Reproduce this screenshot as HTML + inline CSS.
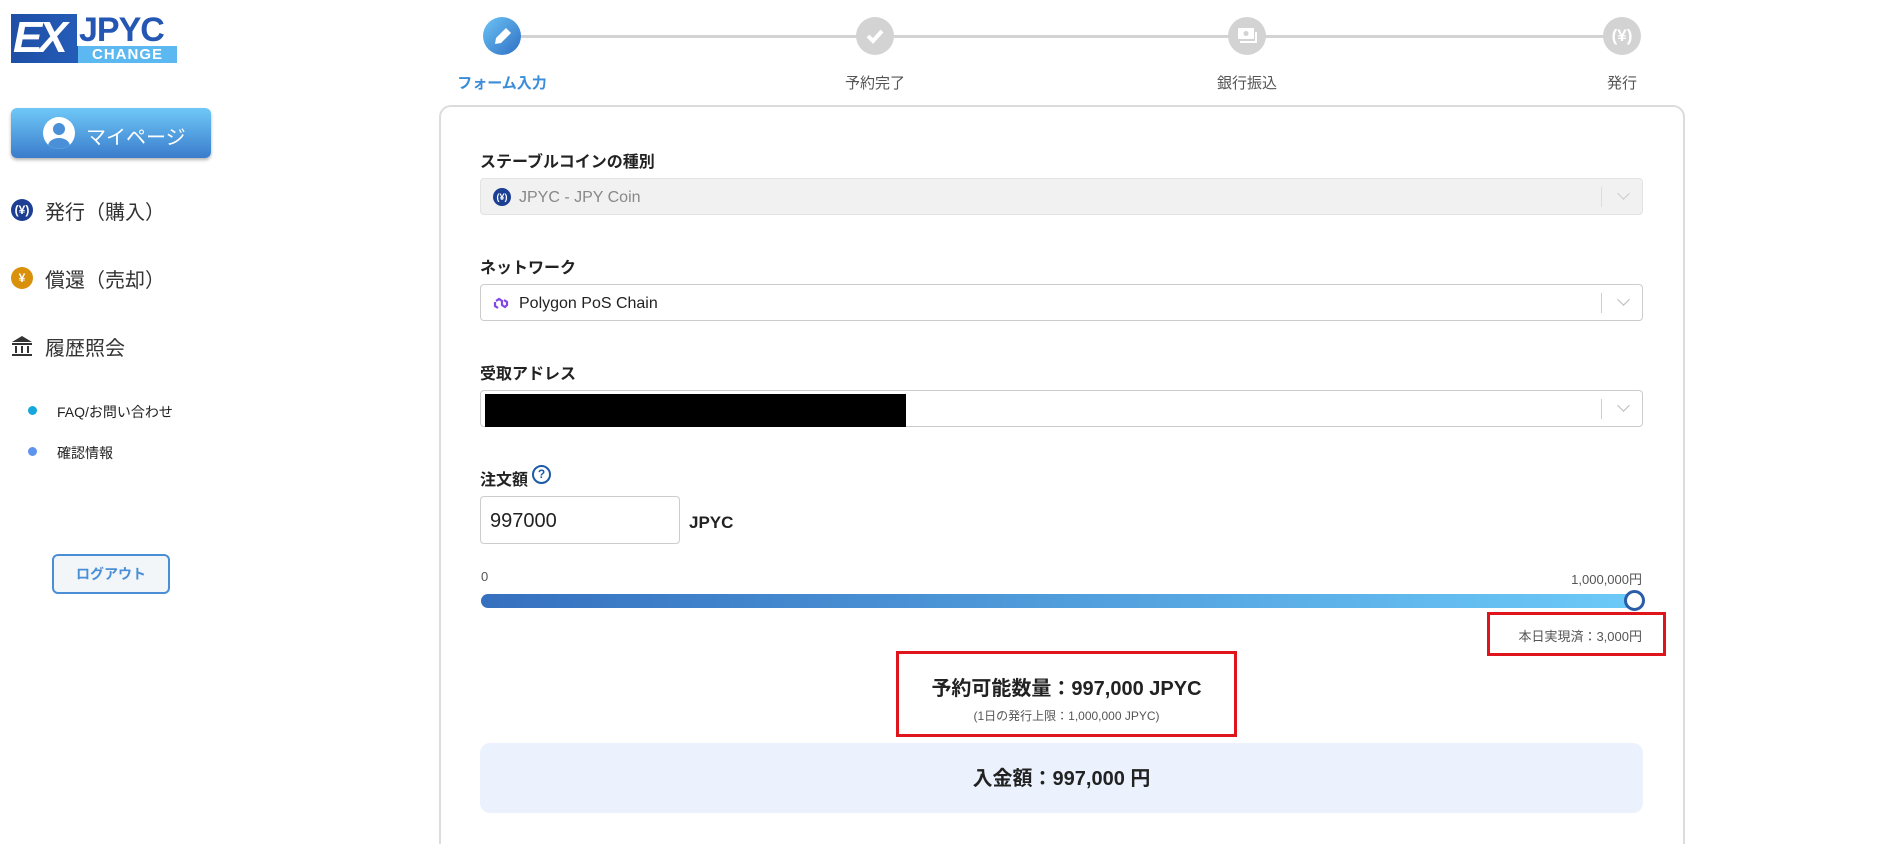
<!DOCTYPE html>
<html style="height:844px;overflow:hidden"><head><meta charset="utf-8">
<style>
*{box-sizing:border-box;margin:0;padding:0}
body{width:1886px;height:844px;overflow:hidden;background:#fff;font-family:"Liberation Sans","Noto Sans CJK JP",sans-serif;color:#222;position:relative}
.a{position:absolute}
.lbl{position:absolute;left:480px;font-size:16px;font-weight:bold;color:#222}
.sel{position:absolute;left:480px;width:1163px;height:37px;border:1px solid #ccc;border-radius:4px;background:#fff}
.sel .sep{position:absolute;right:40px;top:8px;width:1px;height:20px;background:#ccc}
.sel .chev{position:absolute;right:14px;top:10px;width:9px;height:9px;border-right:1.5px solid #bbb;border-bottom:1.5px solid #bbb;transform:rotate(45deg)}
.step{position:absolute;width:38px;height:38px;border-radius:50%;background:#d3d3d3;top:17px}
.stl{position:absolute;top:72px;font-size:15px;color:#555;width:140px;text-align:center}
.nav{position:absolute;left:45px;font-size:20px;color:#333}
</style></head><body>
<!-- logo -->
<div class="a" style="left:11px;top:14px;width:166px;height:49px;background:linear-gradient(90deg,#1f4fa6,#2a6fd0)"></div>
<div class="a" style="left:13px;top:12px;font:bold italic 44px 'Liberation Sans',sans-serif;color:#fff;letter-spacing:-4px;line-height:52px">EX</div>
<div class="a" style="left:77px;top:12px;width:100px;height:34px;font:bold 34px 'Liberation Sans',sans-serif;letter-spacing:-1px;line-height:36px;background:#fff;color:#2456b3;padding-left:2px">JPYC</div>
<div class="a" style="left:78px;top:46px;width:99px;height:17px;background:#5cb8f0;font:bold 15px 'Liberation Sans',sans-serif;color:#fff;text-align:center;line-height:17px;letter-spacing:1px">CHANGE</div>
<!-- mypage -->
<div class="a" style="left:11px;top:108px;width:200px;height:50px;border-radius:6px;background:linear-gradient(#6fc8f7,#3a7ccc);box-shadow:0 2px 3px rgba(0,0,0,.3)"></div>
<div class="a" style="left:43px;top:117px;width:32px;height:32px;border-radius:50%;background:#fff;overflow:hidden"><div class="a" style="left:10px;top:6px;width:12px;height:12px;border-radius:50%;background:#4a90d9"></div><div class="a" style="left:5px;top:21px;width:22px;height:16px;border-radius:50%;background:#4a90d9"></div></div>
<div class="a" style="left:86px;top:121px;font-size:20px;color:#fff">マイページ</div>
<!-- nav -->
<div class="a" style="left:11px;top:199px;width:22px;height:22px;border-radius:50%;background:#1c3f94;color:#fff;font-size:12px;text-align:center;line-height:22px;font-weight:bold">(¥)</div>
<div class="nav" style="top:196px">発行（購入）</div>
<div class="a" style="left:11px;top:267px;width:22px;height:22px;border-radius:50%;background:#d9900a;color:#fff;font-size:12px;text-align:center;line-height:22px;font-weight:bold">¥</div>
<div class="nav" style="top:264px">償還（売却）</div>
<svg class="a" style="left:11px;top:335px" width="22" height="22" viewBox="0 0 22 22"><path d="M1 7L11 1L21 7Z" fill="#333"/><rect x="1" y="8" width="20" height="2" fill="#333"/><rect x="4" y="11" width="2" height="7" fill="#333"/><rect x="10" y="11" width="2" height="7" fill="#333"/><rect x="16" y="11" width="2" height="7" fill="#333"/><rect x="1" y="19" width="20" height="2" fill="#333"/></svg>
<div class="nav" style="top:332px">履歴照会</div>
<div class="a" style="left:28px;top:406px;width:9px;height:9px;border-radius:50%;background:#17a7dd"></div>
<div class="a" style="left:57px;top:402px;font-size:14px;color:#222">FAQ/お問い合わせ</div>
<div class="a" style="left:28px;top:447px;width:9px;height:9px;border-radius:50%;background:#5f94ee"></div>
<div class="a" style="left:57px;top:443px;font-size:14px;color:#222">確認情報</div>
<div class="a" style="left:52px;top:554px;width:118px;height:40px;border:2px solid #4a8fd6;border-radius:6px;background:#f3f6f9;color:#4a8fd6;font-size:14px;font-weight:bold;text-align:center;line-height:36px">ログアウト</div>
<!-- stepper -->
<div class="a" style="left:502px;top:35px;width:1120px;height:3px;background:#d3d3d3"></div>
<div class="step" style="left:483px;background:linear-gradient(135deg,#6cc4f5,#2f6fc4)"><svg width="38" height="38" viewBox="0 0 38 38"><path d="M12 27L13 21L23 11L28 16L18 26Z" fill="#fff"/></svg></div>
<div class="step" style="left:856px"><svg width="38" height="38" viewBox="0 0 38 38"><path d="M12 19L17 24L26 14" stroke="#fff" stroke-width="4" fill="none"/></svg></div>
<div class="step" style="left:1228px"><svg width="38" height="38" viewBox="0 0 38 38"><rect x="10" y="11" width="16" height="11" rx="1" fill="#fff"/><circle cx="18" cy="16.5" r="2.5" fill="#d3d3d3"/><path d="M12 25H28V15" stroke="#fff" stroke-width="2" fill="none"/></svg></div>
<div class="step" style="left:1603px;color:#fff;font-weight:bold;font-size:17px;text-align:center;line-height:38px">(¥)</div>
<div class="stl" style="left:432px;color:#3a8dd8;font-weight:bold">フォーム入力</div>
<div class="stl" style="left:805px">予約完了</div>
<div class="stl" style="left:1177px">銀行振込</div>
<div class="stl" style="left:1552px">発行</div>
<!-- card -->
<div class="a" style="left:439px;top:105px;width:1246px;height:760px;border:2px solid #dcdcdf;border-radius:12px"></div>
<div class="lbl" style="top:148px">ステーブルコインの種別</div>
<div class="sel" style="top:178px;background:#f1f1f1;border-color:#e3e3e3"><div class="a" style="left:12px;top:9px;width:18px;height:18px;border-radius:50%;background:#1c3f94;color:#fff;font-size:9px;text-align:center;line-height:18px;font-weight:bold">(¥)</div><div class="a" style="left:38px;top:10px;font-size:16px;color:#888">JPYC - JPY Coin</div><div class="sep" style="background:#ddd"></div><div class="chev" style="border-color:#ccc"></div></div>
<div class="lbl" style="top:254px">ネットワーク</div>
<div class="sel" style="top:284px"><svg class="a" style="left:12px;top:10px" width="16" height="16" viewBox="0 0 16 16"><path d="M3 6L6 4L9 6V10L12 12L14 10V7L11 5" stroke="#8247e5" stroke-width="2.2" fill="none"/><path d="M2 7V11L5 13" stroke="#8247e5" stroke-width="2.2" fill="none"/></svg><div class="a" style="left:38px;top:10px;font-size:16px;color:#222">Polygon PoS Chain</div><div class="sep"></div><div class="chev"></div></div>
<div class="lbl" style="top:360px">受取アドレス</div>
<div class="sel" style="top:390px"><div class="a" style="left:4px;top:3px;width:421px;height:33px;background:#000"></div><div class="sep"></div><div class="chev"></div></div>
<div class="lbl" style="top:466px">注文額</div>
<div class="a" style="left:532px;top:465px;width:19px;height:19px;border:2px solid #1c5aa8;border-radius:50%;color:#1c5aa8;font-size:12px;font-weight:bold;text-align:center;line-height:15px">?</div>
<div class="a" style="left:480px;top:496px;width:200px;height:48px;border:1px solid #ccc;border-radius:4px;font-size:20px;padding:13px 9px">997000</div>
<div class="a" style="left:689px;top:513px;font-size:17px;font-weight:bold">JPYC</div>
<div class="a" style="left:481px;top:569px;font-size:13px;color:#555">0</div>
<div class="a" style="right:244px;top:569px;font-size:13px;color:#555">1,000,000円</div>
<div class="a" style="left:481px;top:594px;width:1155px;height:14px;border-radius:7px;background:linear-gradient(90deg,#3570bf,#6ccaf8)"></div>
<div class="a" style="left:1624px;top:590px;width:21px;height:21px;border-radius:50%;border:3px solid #2a5ca8;background:#fff"></div>
<div class="a" style="left:1487px;top:612px;width:179px;height:44px;border:3px solid #e0151c"></div>
<div class="a" style="right:244px;top:626px;font-size:13px;color:#555">本日実現済：3,000円</div>
<div class="a" style="left:896px;top:651px;width:341px;height:86px;border:3px solid #e0151c"></div>
<div class="a" style="left:896px;top:672px;width:341px;text-align:center;font-size:20px;font-weight:bold">予約可能数量：997,000 JPYC</div>
<div class="a" style="left:896px;top:707px;width:341px;text-align:center;font-size:12px;color:#555">(1日の発行上限：1,000,000 JPYC)</div>
<div class="a" style="left:480px;top:743px;width:1163px;height:70px;border-radius:10px;background:#ebf2fd;text-align:center;font-size:20px;font-weight:bold;line-height:72px">入金額：997,000 円</div>
</body></html>
